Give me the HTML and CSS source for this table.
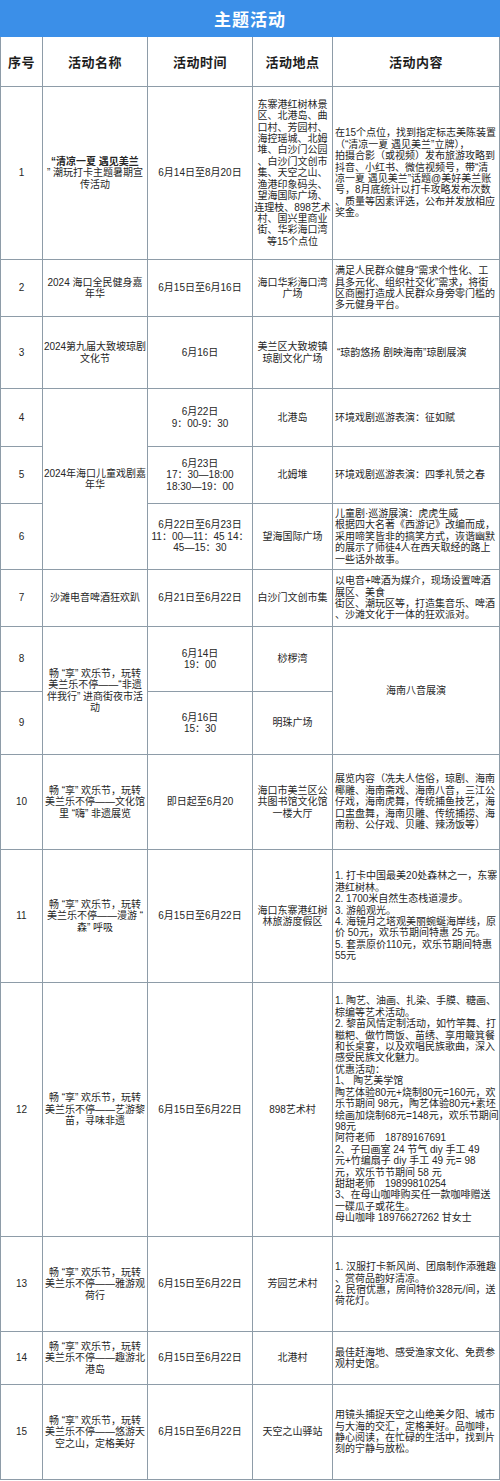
FILE: index.html
```html
<!DOCTYPE html>
<html lang="zh-CN">
<head>
<meta charset="utf-8">
<title>主题活动</title>
<link rel="stylesheet" href="styles.css">
</head>
<body>
<div class="title">主题活动</div>
<div class="grid">
  <div class="c th">序号</div>
  <div class="c th">活动名称</div>
  <div class="c th">活动时间</div>
  <div class="c th">活动地点</div>
  <div class="c th">活动内容</div>

  <div class="c">1</div>
  <div class="c"><span><b class="strong">“清凉一夏 遇见美兰</b><br>” 潮玩打卡主题暑期宣<br>传活动</span></div>
  <div class="c">6月14日至8月20日</div>
  <div class="c"><span>东寨港红树林景<br>区、北港岛、曲<br>口村、芳园村、<br>海控瑶城、北姆<br>堆、白沙门公园<br>、白沙门文创市<br>集、天空之山、<br>渔港印象码头、<br>望海国际广场、<br>连理枝、898艺术<br>村、国兴里商业<br>街、华彩海口湾<br>等15个点位</span></div>
  <div class="c desc"><span>在15个点位，找到指定标志美陈装置<br>（“清凉一夏 遇见美兰”立牌），<br>拍摄合影（或视频）发布旅游攻略到<br>抖音、小红书、微信视频号，带“清<br>凉一夏 遇见美兰”话题@美好美兰账<br>号，8月底统计以打卡攻略发布次数<br>、质量等因素评选，公布并发放相应<br>奖金。</span></div>

  <div class="c">2</div>
  <div class="c"><span>2024 海口全民健身嘉<br>年华</span></div>
  <div class="c">6月15日至6月16日</div>
  <div class="c"><span>海口华彩海口湾<br>广场</span></div>
  <div class="c desc"><span>满足人民群众健身“需求个性化、工<br>具多元化、组织社交化”需求，将街<br>区商圈打造成人民群众身旁零门槛的<br>多元健身平台。</span></div>

  <div class="c">3</div>
  <div class="c"><span>2024第九届大致坡琼剧<br>文化节</span></div>
  <div class="c">6月16日</div>
  <div class="c"><span>美兰区大致坡镇<br>琼剧文化广场</span></div>
  <div class="c desc"><span class="ind">“琼韵悠扬 剧映海南”琼剧展演</span></div>

  <div class="c">4</div>
  <div class="c span3"><span>2024年海口儿童戏剧嘉<br>年华</span></div>
  <div class="c"><span>6月22日<br>9：00-9：30</span></div>
  <div class="c">北港岛</div>
  <div class="c desc"><span>环境戏剧巡游表演：征如赋</span></div>

  <div class="c">5</div>
  <div class="c"><span>6月23日<br>17：30—18:00<br>18:30—19：00</span></div>
  <div class="c">北姆堆</div>
  <div class="c desc"><span>环境戏剧巡游表演：四季礼赞之春</span></div>

  <div class="c">6</div>
  <div class="c"><span>6月22日至6月23日<br>11：00—11：45 14：<br>45—15：30</span></div>
  <div class="c">望海国际广场</div>
  <div class="c desc"><span>儿童剧·巡游展演：虎虎生威<br>根据四大名著《西游记》改编而成，<br>采用啼笑皆非的搞笑方式，诙谐幽默<br>的展示了师徒4人在西天取经的路上<br>一些话外故事。</span></div>

  <div class="c">7</div>
  <div class="c">沙滩电音啤酒狂欢趴</div>
  <div class="c">6月21日至6月22日</div>
  <div class="c">白沙门文创市集</div>
  <div class="c desc"><span>以电音+啤酒为媒介，现场设置啤酒<br>展区、美食<br>街区、潮玩区等，打造集音乐、啤酒<br>、沙滩文化于一体的狂欢派对。</span></div>

  <div class="c">8</div>
  <div class="c span2"><span>畅 “享” 欢乐节，玩转<br>美兰乐不停——“非遗<br>伴我行” 进商街夜市活<br>动</span></div>
  <div class="c"><span>6月14日<br>19：00</span></div>
  <div class="c">桫椤湾</div>
  <div class="c span2">海南八音展演</div>

  <div class="c">9</div>
  <div class="c"><span>6月16日<br>15：30</span></div>
  <div class="c">明珠广场</div>

  <div class="c">10</div>
  <div class="c"><span>畅 “享” 欢乐节，玩转<br>美兰乐不停——文化馆<br>里 “嗨” 非遗展览</span></div>
  <div class="c">即日起至6月20</div>
  <div class="c"><span>海口市美兰区公<br>共图书馆文化馆<br>一楼大厅</span></div>
  <div class="c desc"><span>展览内容（冼夫人信俗，琼剧、海南<br>椰雕、海南斋戏、海南八音，三江公<br>仔戏，海南虎舞，传统捕鱼技艺，海<br>口盅盘舞，海南贝雕、传统捕捞、海<br>南粉、公仔戏、贝雕、辣汤饭等）</span></div>

  <div class="c">11</div>
  <div class="c"><span>畅 “享” 欢乐节，玩转<br>美兰乐不停——漫游 “<br>森” 呼吸</span></div>
  <div class="c">6月15日至6月22日</div>
  <div class="c"><span>海口东寨港红树<br>林旅游度假区</span></div>
  <div class="c desc"><span>1. 打卡中国最美20处森林之一，东寨<br>港红树林。<br>2. 1700米自然生态栈道漫步。<br>3. 游船观光。<br>4. 海镜月之塔观美丽蜿蜒海岸线，原<br>价 50元，欢乐节期间特惠 25 元。<br>5. 套票原价110元，欢乐节期间特惠<br>55元</span></div>

  <div class="c">12</div>
  <div class="c"><span>畅 “享” 欢乐节，玩转<br>美兰乐不停——艺游黎<br>苗，寻味非遗</span></div>
  <div class="c">6月15日至6月22日</div>
  <div class="c">898艺术村</div>
  <div class="c desc"><span>1. 陶艺、油画、扎染、手膜、糖画、<br>棕编等艺术活动。<br>2. 黎苗风情定制活动，如竹竿舞、打<br>糍粑、做竹筒饭、苗绣、享用簸箕餐<br>和长桌宴，以及欢唱民族歌曲，深入<br>感受民族文化魅力。<br>优惠活动：<br>1、 陶艺美学馆<br>陶艺体验80元+烧制80元=160元，欢<br>乐节期间 98元，陶艺体验80元+素坯<br>绘画加烧制68元=148元，欢乐节期间<br>98元<br>阿符老师　18789167691<br>2、子曰画室 24 节气 diy 手工 49<br>元+竹编扇子 diy 手工 49 元= 98<br>元，欢乐节节期间 58 元<br>甜甜老师　19899810254<br>3、在母山咖啡购买任一款咖啡赠送<br>一碟瓜子或花生。<br>母山咖啡 18976627262 甘女士</span></div>

  <div class="c">13</div>
  <div class="c"><span>畅 “享” 欢乐节，玩转<br>美兰乐不停——雅游观<br>荷行</span></div>
  <div class="c">6月15日至6月22日</div>
  <div class="c">芳园艺术村</div>
  <div class="c desc"><span>1. 汉服打卡新风尚、团扇制作添雅趣<br>、赏荷品韵好清凉。<br>2. 民宿优惠，房间特价328元/间，送<br>荷花灯。</span></div>

  <div class="c">14</div>
  <div class="c"><span>畅 “享” 欢乐节，玩转<br>美兰乐不停——趣游北<br>港岛</span></div>
  <div class="c">6月15日至6月22日</div>
  <div class="c">北港村</div>
  <div class="c desc"><span>最佳赶海地、感受渔家文化、免费参<br>观村史馆。</span></div>

  <div class="c">15</div>
  <div class="c"><span>畅 “享” 欢乐节，玩转<br>美兰乐不停——悠游天<br>空之山，定格美好</span></div>
  <div class="c">6月15日至6月22日</div>
  <div class="c">天空之山驿站</div>
  <div class="c desc"><span>用镜头捕捉天空之山绝美夕阳、城市<br>与大海的交汇，定格美好。品咖啡，<br>静心阅读，在忙碌的生活中，找到片<br>刻的宁静与放松。</span></div>
</div>
</body>
</html>
```

FILE: styles.css
```css
* { box-sizing: border-box; }
html, body { margin: 0; padding: 0; background: #ffffff; }
body {
  width: 500px;
  font-family: "Liberation Sans", "Noto Sans CJK SC", sans-serif;
  color: #262626;
}
.title {
  height: 37px;
  background: #3b8fe8;
  color: #ffffff;
  font-family: "Noto Sans CJK SC", sans-serif;
  font-size: 17px;
  font-weight: 700;
  letter-spacing: 1px;
  display: flex;
  align-items: center;
  justify-content: center;
}
.grid {
  display: grid;
  grid-template-columns: 42px 105px 105px 80px 167px;
  grid-template-rows: 50px 173px 57px 72px 58px 57px 66px 57px 65px 63px 95px 133px 254px 95px 53px 95px;
  border-left: 1px solid #8e9ca8;
  width: 500px;
}
.c {
  border-right: 1px solid #8e9ca8;
  border-bottom: 1px solid #8e9ca8;
  display: flex;
  align-items: center;
  justify-content: center;
  text-align: center;
  font-size: 10px;
  line-height: 11.4px;
  white-space: nowrap;
  padding: 0 1px;
}
.th {
  font-family: "Noto Sans CJK SC", sans-serif;
  font-size: 13px;
  font-weight: 700;
  color: #1e1e1e;
  letter-spacing: 0.5px;
}
.strong { font-weight: 700; }
.desc {
  justify-content: flex-start;
  text-align: left;
  padding: 0 0 0 2px;
}
.ind { padding-left: 2px; }
.span3 { grid-row: span 3; }
.span2 { grid-row: span 2; }
```
